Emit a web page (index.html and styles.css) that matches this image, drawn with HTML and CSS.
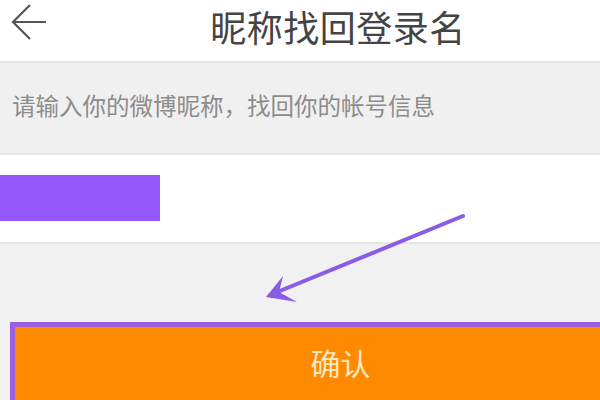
FILE: index.html
```html
<!DOCTYPE html>
<html lang="zh-CN">
<head>
    <meta charset="UTF-8">
    <meta name="viewport" content="width=device-width, initial-scale=1.0">
    <title>昵称找回登录名</title>
    <link rel="stylesheet" href="styles.css">
</head>
<body>
    <div class="page">
        <div class="header">
            <span class="back">
                <svg width="50" height="40" viewBox="0 0 50 40">
                    <path d="M46 20 H13 M30 3 L13 20 L30 37" fill="none" stroke="#555" stroke-width="2.2"/>
                </svg>
            </span>
            <h1 class="title">昵称找回登录名</h1>
        </div>

        <div class="hint">请输入你的微博昵称，找回你的帐号信息</div>

        <div class="input-row">
            <div class="mark"></div>
        </div>

        <div class="actions">
            <button class="confirm">确认</button>
        </div>

        <!-- annotation arrow drawn over the page -->
        <svg class="pointer" width="600" height="400" viewBox="0 0 600 400">
            <line x1="463" y1="216" x2="270" y2="295" stroke="#8a5ce6" stroke-width="4" stroke-linecap="round"/>
            <path d="M266 297 L283 276 L279 292 L297 302 Z" fill="#8a5ce6"/>
        </svg>
    </div>
</body>
</html>
```

FILE: styles.css
```css
body {
    margin: 0;
    font-family: "Noto Sans CJK SC", "Noto Sans", sans-serif;
    background-color: #f1f1f1;
}

.page {
    position: relative;
    width: 600px;
    height: 400px;
    overflow: hidden;
}

.header {
    box-sizing: border-box;
    height: 63px;
    padding-top: 0;
    background-color: white;
    border-bottom: 2px solid #e4e4e4;
    display: flex;
    justify-content: center;
    align-items: flex-start;
    position: relative;
}

.back {
    position: absolute;
    left: 0;
    top: 2px;
}

.title {
    margin: 0;
    font-size: 36px;
    font-weight: normal;
    color: #444;
    line-height: 53px;
    padding-left: 76px;
    letter-spacing: 0.5px;
}

.hint {
    box-sizing: border-box;
    height: 92px;
    background-color: #f0f0f0;
    border-bottom: 2px solid #e6e6e6;
    padding: 0 0 6px 12px;
    font-size: 23.5px;
    color: #8c8c8c;
    display: flex;
    align-items: center;
}

.input-row {
    box-sizing: border-box;
    height: 89px;
    background-color: white;
    border-bottom: 2px solid #e6e6e6;
    padding-top: 20px;
}

.mark {
    width: 160px;
    height: 46px;
    background-color: #9457fc;
}

.actions {
    padding: 78px 0 0 10px;
}

.confirm {
    display: block;
    width: 100%;
    height: 90px;
    background-color: #ff8a00;
    border: none;
    border-top: 5px solid #9c5fe0;
    border-left: 5px solid #9c5fe0;
    font-family: inherit;
    font-size: 30px;
    color: #fde8c2;
    padding: 0 0 18px 66px;
    text-align: center;
    line-height: 70px;
}

.pointer {
    position: absolute;
    left: 0;
    top: 0;
}
```
